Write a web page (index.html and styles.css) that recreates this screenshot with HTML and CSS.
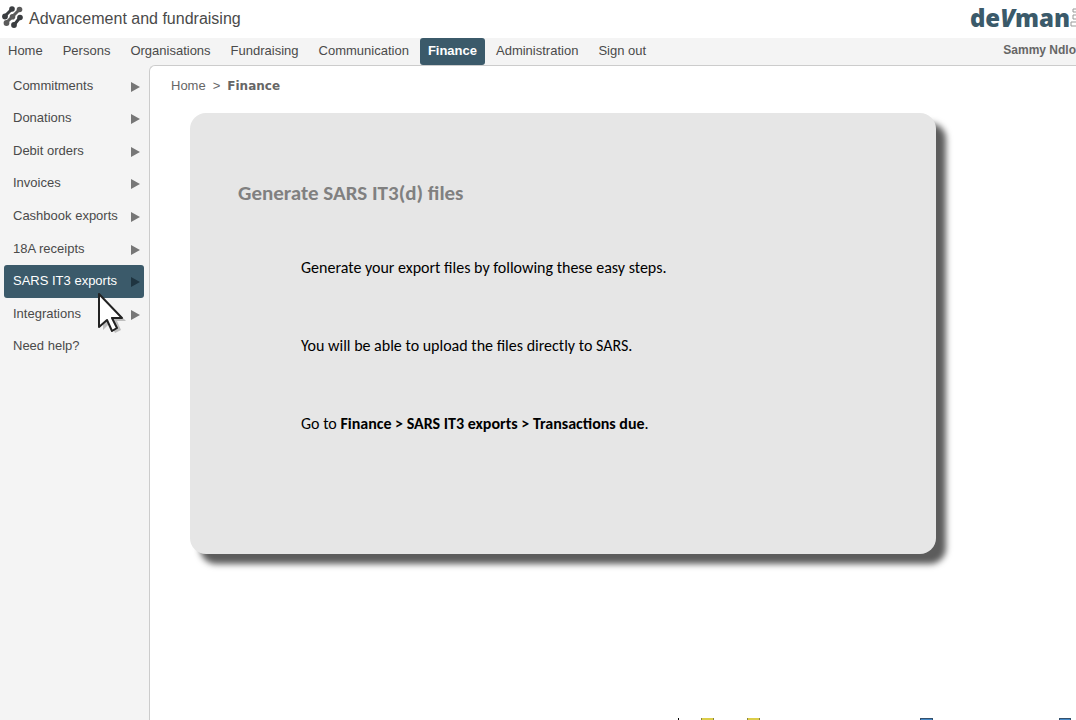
FILE: index.html
```html
<!DOCTYPE html>
<html lang="en">
<head>
<meta charset="utf-8">
<title>Advancement and fundraising</title>
<link rel="stylesheet" href="styles.css">
</head>
<body>
<header class="masthead">
  <svg class="mark" viewBox="0 0 22 22" width="22" height="22" aria-hidden="true">
    <g stroke-width="3" stroke-linecap="round">
      <g fill="#3a3d40" stroke="#3a3d40"><path d="M10 2 3 9M18 10.500l-6 7.500" /></g>
      <path d="M17.500 2.500 10.500 9.500l-6 6" stroke="#5b5b5b" fill="none"/>
    </g>
    <g fill="#3a3d40"><circle cx="10" cy="2" r="2.800"/><circle cx="3" cy="9.500" r="2.900"/><circle cx="18" cy="10.500" r="2.800"/><circle cx="12" cy="18" r="2.900"/></g>
    <g fill="#5b5b5b"><circle cx="17.500" cy="2.500" r="2.800"/><circle cx="10.500" cy="9.700" r="2.800"/><circle cx="4.500" cy="16" r="2.900"/></g>
  </svg>
  <h1 class="app-title">Advancement and fundraising</h1>
  <div class="brand">de<i>V</i>man<svg class="brand-tail" viewBox="0 0 6 20" width="6" height="20" aria-hidden="true"><path d="M6 1H3v3h3M6 7H3v4h3M6 14H1v4h5" fill="none" stroke="#999"/></svg></div>
</header>
<nav class="menu" aria-label="Main">
  <a href="#">Home</a>
  <a href="#">Persons</a>
  <a href="#">Organisations</a>
  <a href="#">Fundraising</a>
  <a href="#">Communication</a>
  <a href="#" class="current">Finance</a>
  <a href="#">Administration</a>
  <a href="#">Sign out</a>
  <span class="user">Sammy Ndlovu</span>
</nav>
<div class="body">
  <nav class="side" aria-label="Finance">
    <div class="side-list">
      <a href="#" class="sub">Commitments</a>
      <a href="#" class="sub">Donations</a>
      <a href="#" class="sub">Debit orders</a>
      <a href="#" class="sub">Invoices</a>
      <a href="#" class="sub">Cashbook exports</a>
      <a href="#" class="sub">18A receipts</a>
      <a href="#" class="sub current">SARS IT3 exports
        <svg class="pointer" viewBox="0 0 34 42" width="34" height="42" aria-hidden="true">
          <path d="M6 5v32l7-7 5 10 6-3-4-9h9z" fill="#000" opacity=".22"/>
          <path d="M2 1v33l8-7 5 11 5-3-5-10h10z" fill="#fff" stroke="#222" stroke-width="2" stroke-linejoin="round"/>
        </svg>
      </a>
      <a href="#" class="sub">Integrations</a>
      <a href="#">Need help?</a>
    </div>
  </nav>
  <main class="content">
    <div class="crumbs"><a href="#">Home</a><span>&gt;</span><b>Finance</b></div>
    <section class="card">
      <h2>Generate SARS IT3(d) files</h2>
      <p>Generate your export files by following these easy steps.</p>
      <p>You will be able to upload the files directly to SARS.</p>
      <p>Go to <b>Finance &gt; SARS IT3 exports &gt; Transactions due</b>.</p>
    </section>
    <svg class="chart" viewBox="0 0 400 2" width="400" height="2" aria-hidden="true">
      <path d="M2 0h1v2h-1z" fill="#000"/>
      <path d="M25 0h13v2h-13zM71 0h13v2h-13z" fill="#8a8440"/>
      <path d="M26 0h11v2h-11zM72 0h11v2h-11z" fill="#dccd48"/>
      <path d="M244 0h13v2h-13zM383 0h12v2h-12z" fill="#34506c"/>
      <path d="M245 1h11v1h-11zM384 1h10v1h-10z" fill="#4389c8"/>
    </svg>
  </main>
</div>
</body>
</html>
```
FILE: styles.css
```css
* { box-sizing: border-box; }
body {
  margin: 0;
  min-height: 100vh;
  display: flex;
  flex-direction: column;
  overflow: hidden;
  background: #fff;
  color: #4a4a4a;
  font: 13px/20px "Liberation Sans", Arial, sans-serif;
}
a { color: inherit; text-decoration: none; }
.masthead {
  display: flex;
  align-items: center;
  height: 38px;
  padding: 0 0 2px 2px;
}
.mark { overflow: visible; }
.app-title {
  flex: 1;
  margin: 2px 0 0 5px;
  font-size: 16px;
  font-weight: 400;
}
.brand {
  display: flex;
  align-items: center;
  color: #3b5a6a;
  font: 800 24px/24px "Open Sans", sans-serif;
}
.menu {
  display: flex;
  gap: 2px;
  height: 28px;
  background: #f4f4f4;
  overflow: hidden;
}
.menu a {
  height: 27px;
  padding: 3px 9px;
  border-radius: 3px;
  white-space: nowrap;
}
.menu a:first-child { padding-left: 8px; }
.menu .current, .side .current { background: #3b5a6a; color: #fff; }
.menu .current { padding: 3px 8px; font-weight: 700; }
.user {
  margin: 2px -14px 0 auto;
  font-size: 12px;
  font-weight: 700;
  color: #666;
}
.body { flex: 1; display: flex; background: #f4f4f4; }
.side {
  width: 149px;
  padding: 4px 5px 0 4px;
}
.side-list {
  display: grid;
  grid-auto-rows: 1fr;
  height: 293px;
}
.side a {
  position: relative;
  display: flex;
  align-items: center;
  justify-content: space-between;
  padding: 0 4px 1px 9px;
  border-radius: 3px;
}
.side .sub::after {
  content: "";
  margin-top: 2px;
  border: 5px solid transparent;
  border-left: 9px solid #777;
  border-right: 0;
}
.side .current::after { border-left-color: #1f3440; }
.pointer { position: absolute; left: 93px; top: 28px; z-index: 1; }
.content {
  flex: 1;
  display: flex;
  flex-direction: column;
  margin-top: -1px;
  padding-left: 21px;
  background: #fff;
  border: 1px solid #ccc;
  border-width: 1px 0 0 1px;
  border-top-left-radius: 6px;
}
.crumbs {
  display: flex;
  gap: 7px;
  padding-top: 10px;
  color: #666;
}
.crumbs b { font: 700 12px/20px "DejaVu Sans", sans-serif; }
.card {
  margin: 17px 140px 0 19px;
  padding: 66px 48px 64px;
  background: #e6e6e6;
  border-radius: 16px;
  box-shadow: 10px 10px 6px #5c5c5c;
  color: #000;
  font: 16px/24px Carlito, Calibri, Lato, sans-serif;
}
.card h2 {
  margin: 0 0 49px;
  color: #808080;
  font-size: 21px;
  line-height: 28px;
}
.card p { margin: 0 0 54px; padding-left: 63px; }
.chart { margin: auto 0 0 505px; }
```
